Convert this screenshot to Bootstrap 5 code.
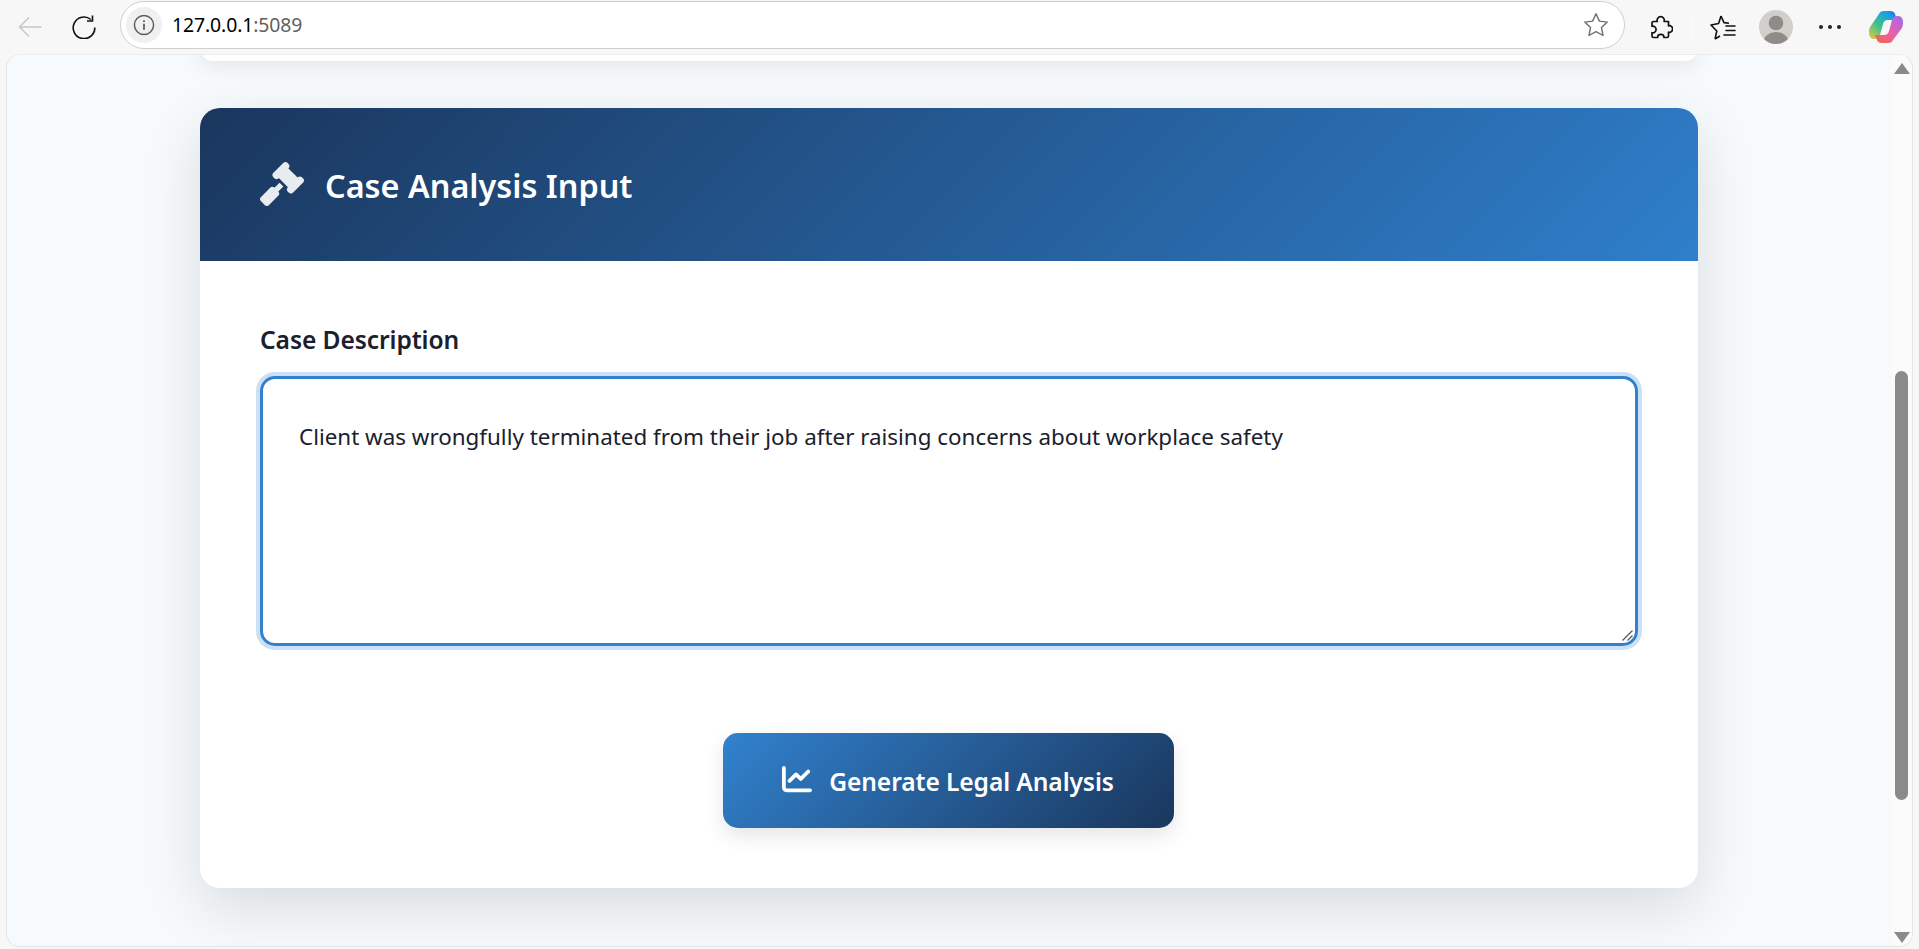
<!DOCTYPE html>
<html lang="en">
<head>
<meta charset="utf-8">
<title>Case Analysis Input</title>
<link href="https://cdn.jsdelivr.net/npm/bootstrap@5.3.0/dist/css/bootstrap.min.css" rel="stylesheet">
<style>
html,body{height:100%;}
body{background:#f7f7f7;overflow:hidden;font-family:"Noto Sans","Liberation Sans",sans-serif;color:#1a202c;}
.chrome-bar{height:54px;padding-left:18px;}
.tool-svg{display:block;flex:none;}
.addr-pill{width:1505px;height:48px;margin:0 0 4px 24px;padding:0 15px 0 5px;background:#fff;border:1.5px solid #cfcfcf;border-radius:24px;}
.info-pill{width:36px;height:36px;border-radius:50%;background:#f0f0f0;}
.url-text{font-size:19.4px;margin-left:10px;color:#000;letter-spacing:-.1px;}
.url-port{color:#5f5f5f;}
.viewport-frame{height:893px;margin:0 6px;border:1px solid #e4e4e4;border-top-color:#ececec;border-radius:14px;overflow:hidden;background-color:#f6fafd;}
.page-scroll{min-width:0;background:#f6fafd;}
.stub-card{width:1498px;height:26px;margin-top:-20px;background:#fff;border-radius:20px;box-shadow:0 6px 20px rgba(0,0,0,.08);}
.main-card{width:1498px;height:780px;margin-top:47px;border:0;border-radius:20px;overflow:hidden;box-shadow:0 20px 60px rgba(0,0,0,.12);}
.main-head{height:153px;padding:0 60px;border:0;border-radius:0!important;background:linear-gradient(135deg,#1a365d,#2f7fcb);color:#fff;}
.main-head h2{font-size:32.4px;font-weight:600;margin:2px 0 0 21px;}
.gavel-ic{opacity:.9;margin-top:-1px;}
.main-body{padding:60px 60px 0;}
.field-label{font-size:24.6px;font-weight:600;margin:0 0 17px;line-height:38px;height:38px;display:block;color:#1a202c;letter-spacing:-.1px;}
.area-wrap{position:relative;}
.area-grip{position:absolute;right:5px;bottom:5px;display:block;}
.case-area.form-control{height:270px;border:3px solid #3182ce;border-radius:15px;padding:40px 36px 24px;font-size:22.4px;line-height:1.6;color:#1a202c;box-shadow:0 0 0 4px rgba(49,130,206,.25);resize:none;}
.go-btn.btn{width:451px;height:95px;margin:87px 2px 0 0;padding-top:9px;border:0;border-radius:15px;background:linear-gradient(135deg,#3182ce,#1a365d);color:#fff;font-size:24.6px;font-weight:600;box-shadow:0 8px 20px rgba(0,0,0,.1);letter-spacing:-.1px;}
.go-btn svg{margin-right:17px;}
.scroll-rail{width:21px;flex:none;background:#fbfbfb;}
.rail-up{width:0;height:0;border-left:8px solid transparent;border-right:8px solid transparent;border-bottom:11px solid #8a8a8a;margin:8px auto 0;}
.rail-thumb{width:13px;height:429px;margin:297px auto 0;background:#8a8a8a;border-radius:7px;}
.rail-down{width:0;height:0;border-left:8px solid transparent;border-right:8px solid transparent;border-top:11px solid #8a8a8a;margin:132px auto 0;}
</style>
</head>
<body>
<div class="chrome-bar d-flex align-items-center">
  <svg class="tool-svg" width="24" height="24" viewBox="0 0 24 24" fill="none" stroke="#c6c6c6" stroke-width="1.5"><path d="M23.500 12H1.500M11 2.500L1.500 12l9.500 9.500"/></svg>
  <svg class="tool-svg" style="margin-left:30px" width="24" height="24" viewBox="0 0 24 24" fill="none" stroke="#111" stroke-width="1.6"><path d="M18.900 4.500A10.800 10.800 0 1 0 22.800 12.500"/><path d="M20.500 .5v5.500H15"/></svg>
  <div class="addr-pill d-flex align-items-center">
    <div class="info-pill d-flex align-items-center justify-content-center">
      <svg width="22" height="22" viewBox="0 0 22 22" fill="none" stroke="#5f5f5f" stroke-width="1.500"><circle cx="11" cy="11" r="9.600"/><path d="M11 9.800v6" stroke-width="1.800"/><path d="M11 6.200v1.800" stroke-width="1.800"/></svg>
    </div>
    <span class="url-text">127.0.0.1<span class="url-port">:5089</span></span>
    <svg class="tool-svg ms-auto" width="26" height="26" viewBox="0 0 26 26" fill="none" stroke="#6e6e6e" stroke-width="1.400" stroke-linejoin="round"><path d="M13 1.800l3.400 7.300 7.900 1-5.800 5.500 1.500 7.900-7-3.900-7 3.900 1.500-7.900L1.700 10.100l7.900-1z"/></svg>
  </div>
  <svg class="tool-svg" style="margin-left:24px" width="24" height="24" viewBox="0 0 24 24" fill="none" stroke="#111" stroke-width="1.700" stroke-linejoin="round"><path d="M4.500 6.500H8.300a3.600 3.600 0 1 1 6.800 0H19.500v4.300a3.300 3.300 0 1 1 0 6.400V21a1.500 1.500 0 0 1-1.500 1.500H15a3.200 3.200 0 1 0-6.400 0H4.500a1.500 1.500 0 0 1-1.500-1.500v-3.300a3.300 3.300 0 1 0 0-6.400V8a1.500 1.500 0 0 1 1.500-1.500z"/></svg>
  <div class="bg-secondary-subtle" style="width:2px;height:24px;margin-left:18px"></div>
  <svg class="tool-svg" style="margin-left:17px" width="26" height="26" viewBox="0 0 26 26" fill="none" stroke="#111" stroke-width="1.600" stroke-linejoin="round"><path d="M11 2l3 6.600 5 .6M5 25l1.800-8L1 11l7.600-1.500L11 2M5 25l5-3"/><path d="M16 12h9M16 16.500h9M14 21h11" stroke-linecap="round"/></svg>
  <svg class="tool-svg" style="margin-left:23px" width="34" height="34" viewBox="0 0 34 34"><defs><clipPath id="avClip"><circle cx="17" cy="17" r="17"/></clipPath></defs><g clip-path="url(#avClip)"><rect width="34" height="34" fill="#d0cfcb"/><circle cx="17" cy="13" r="7.300" fill="#8f8b87"/><ellipse cx="17" cy="32" rx="12.500" ry="10" fill="#8f8b87"/></g></svg>
  <svg class="tool-svg" style="margin-left:26px" width="22" height="6" viewBox="0 0 22 6" fill="#222"><circle cx="2" cy="3" r="2"/><circle cx="11" cy="3" r="2"/><circle cx="20" cy="3" r="2"/></svg>
  <svg class="tool-svg" style="margin-left:28px" width="34" height="32" viewBox="0 0 34 32"><defs><linearGradient id="cpA" x1="0" y1="1" x2="1" y2="0"><stop offset="0" stop-color="#f5c542"/><stop offset=".4" stop-color="#3fc28a"/><stop offset=".8" stop-color="#1b9be8"/><stop offset="1" stop-color="#1f5fd6"/></linearGradient><linearGradient id="cpB" x1="0" y1="1" x2="1" y2="0"><stop offset="0" stop-color="#f2683c"/><stop offset=".5" stop-color="#ec5fb0"/><stop offset="1" stop-color="#9a6bea"/></linearGradient></defs><path d="M10 3Q11 0 15 0h6q4 0 5 3l2 6H19q-4 0-5 4l-3 11q-1 4-6 4-4 0-5-5-.5-3 1-7z" fill="url(#cpA)"/><path d="M24 29q-1 3-5 3h-6q-4 0-5-3l-2-5h9q4 0 5-4l3-11q1-4 6-4 4 0 5 5 .5 3-1 7z" fill="url(#cpB)"/></svg>
</div>
<div class="viewport-frame d-flex">
  <div class="page-scroll flex-grow-1 d-flex flex-column align-items-center">
    <div class="stub-card flex-none"></div>
    <div class="card main-card">
      <div class="card-header main-head d-flex align-items-center">
        <svg class="gavel-ic" width="44" height="44" viewBox="0 0 512 512" fill="#fff"><path d="M318.600 9.400c-12.500-12.500-32.800-12.500-45.300 0l-120 120c-12.500 12.500-12.500 32.800 0 45.300l16 16c12.500 12.500 32.800 12.500 45.300 0l4-4L325.400 293.400l-4 4c-12.500 12.500-12.500 32.800 0 45.300l16 16c12.500 12.500 32.800 12.500 45.300 0l120-120c12.500-12.500 12.500-32.800 0-45.300l-16-16c-12.500-12.500-32.800-12.500-45.300 0l-4 4L330.600 74.600l4-4c12.500-12.500 12.500-32.800 0-45.300l-16-16zm-152 288c-12.500-12.500-32.800-12.500-45.300 0l-112 112c-12.500 12.500-12.500 32.800 0 45.300l48 48c12.500 12.500 32.800 12.500 45.300 0l112-112c12.500-12.500 12.500-32.800 0-45.300l-1.400-1.400L272 285.300 226.700 240 168 298.700l-1.400-1.400z"/></svg>
        <h2>Case Analysis Input</h2>
      </div>
      <div class="card-body main-body d-flex flex-column">
        <label class="field-label form-label" for="caseText">Case Description</label>
        <div class="area-wrap">
          <textarea id="caseText" class="form-control case-area">Client was wrongfully terminated from their job after raising concerns about workplace safety</textarea>
          <svg class="area-grip" width="11" height="11" viewBox="0 0 11 11" fill="none" stroke="#555" stroke-width="1.200"><path d="M.5 10.500L10.500 .5M5.500 10.500l5-5"/></svg>
        </div>
        <div class="text-center">
          <button type="button" class="btn go-btn"><svg width="30" height="30" viewBox="0 0 512 512" fill="#fff" style="vertical-align:-3px"><path d="M64 64c0-17.700-14.300-32-32-32S0 46.300 0 64V400c0 44.200 35.800 80 80 80H480c17.700 0 32-14.300 32-32s-14.300-32-32-32H80c-8.800 0-16-7.200-16-16V64zm406.600 86.600c12.500-12.500 12.500-32.800 0-45.300s-32.800-12.500-45.300 0L320 210.700l-57.400-57.400c-12.500-12.500-32.800-12.500-45.300 0l-112 112c-12.500 12.500-12.500 32.800 0 45.300s32.800 12.500 45.300 0L240 221.300l57.400 57.400c12.500 12.500 32.800 12.500 45.300 0l128-128z"/></svg>Generate Legal Analysis</button>
        </div>
      </div>
    </div>
  </div>
  <div class="scroll-rail">
    <div class="rail-up"></div>
    <div class="rail-thumb"></div>
    <div class="rail-down"></div>
  </div>
</div>
<script src="https://cdn.jsdelivr.net/npm/bootstrap@5.3.0/dist/js/bootstrap.bundle.min.js"></script>
</body>
</html>
